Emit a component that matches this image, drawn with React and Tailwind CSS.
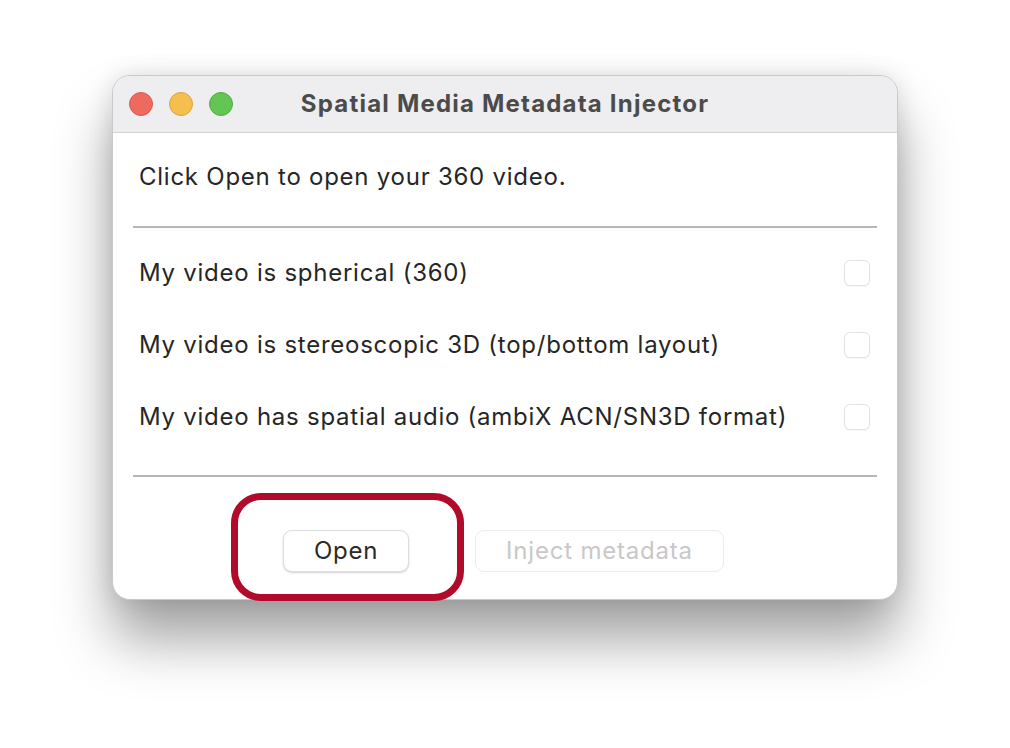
import React from "react";

const font = { fontFamily: 'Inter, "Liberation Sans", Arial, sans-serif' };

function Checkbox() {
  return (
    <div className="w-[26px] h-[26px] rounded-[6px] border border-[#e2e2e2] bg-white shadow-[0_1px_1px_rgba(0,0,0,0.04)] shrink-0" />
  );
}

function Row({ label, h }) {
  return (
    <div className={`flex items-center justify-between ${h} pl-[26px] pr-[27px]`}>
      <span className="text-[24px] text-[#262626] tracking-[0.75px]">{label}</span>
      <Checkbox />
    </div>
  );
}

export default function App() {
  return (
    <div className="w-[1010px] h-[748px] bg-white overflow-hidden pt-[75px] pl-[112px]" style={font}>
      <div className="relative w-[786px] h-[525px] rounded-[18px] bg-white border border-[#c9c9c9] shadow-[0_40px_55px_rgba(0,0,0,0.36),0_0_24px_rgba(0,0,0,0.12)] flex flex-col">
        <div className="h-[57px] shrink-0 rounded-t-[18px] bg-[#eeedf0] border-b border-[#d3d3d3] flex items-center relative">
          <div className="flex items-center gap-[16px] pl-[16px]">
            <div className="w-[24px] h-[24px] rounded-full bg-[#ee6a5f] border border-[#d85a50]" />
            <div className="w-[24px] h-[24px] rounded-full bg-[#f5be4f] border border-[#dca43c]" />
            <div className="w-[24px] h-[24px] rounded-full bg-[#62c554] border border-[#50ad43]" />
          </div>
          <div className="absolute inset-0 flex items-center justify-center pointer-events-none">
            <span className="text-[24px] font-bold text-[#4b4b4b] tracking-[1.2px]">Spatial Media Metadata Injector</span>
          </div>
        </div>
        <div className="flex flex-col">
          <div className="h-[93px] flex items-center pl-[26px] pb-[6px]">
            <span className="text-[24px] text-[#262626] tracking-[0.75px]">Click Open to open your 360 video.</span>
          </div>
          <div className="mx-[20px] h-[2px] bg-[#b6b6b6]" />
          <div className="pt-[8px] pb-[22px] flex flex-col">
            <Row h="h-[73px]" label="My video is spherical (360)" />
            <Row h="h-[72px]" label="My video is stereoscopic 3D (top/bottom layout)" />
            <Row h="h-[72px]" label="My video has spatial audio (ambiX ACN/SN3D format)" />
          </div>
          <div className="mx-[20px] h-[2px] bg-[#b6b6b6]" />
          <div className="flex items-start pt-[53px] pl-[170px] gap-[66px]">
            <div className="w-[126px] h-[42px] rounded-[9px] bg-white border border-[#dedede] shadow-[0_1px_2px_rgba(0,0,0,0.18)] flex items-center justify-center text-[24px] text-[#2a2a2a] tracking-[0.75px]">
              Open
            </div>
            <div className="w-[249px] h-[42px] rounded-[9px] bg-white border border-[#ececec] flex items-center justify-center text-[24px] text-[#c8c8c8] tracking-[0.8px]">
              Inject metadata
            </div>
          </div>
        </div>
        <div className="absolute left-[118px] top-[417px] w-[233px] h-[108px] rounded-[30px] border-[7px] border-[#b10a2b]" />
      </div>
    </div>
  );
}
